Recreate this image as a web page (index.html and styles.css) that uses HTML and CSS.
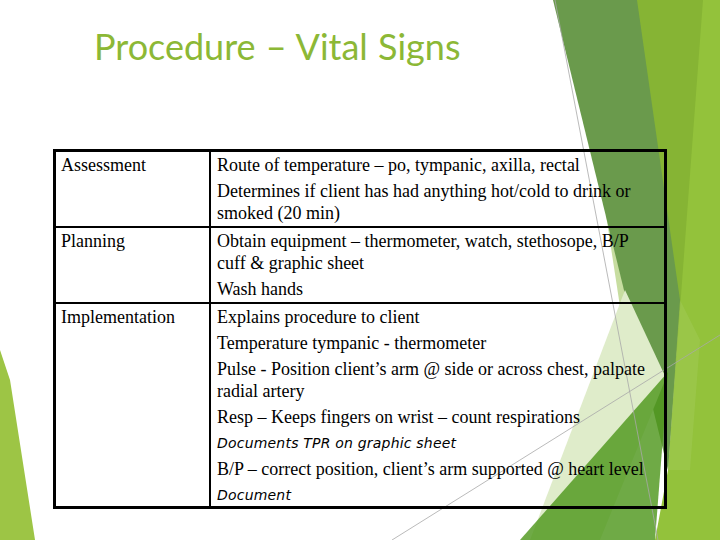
FILE: index.html
```html
<!DOCTYPE html>
<html>
<head>
<meta charset="utf-8">
<link rel="stylesheet" href="styles.css">
</head>
<body>
<div class="slide">
  <svg class="deco" viewBox="0 0 720 540" width="720" height="540" aria-hidden="true">
    <polygon class="base" points="637,0 720,0 720,540 655,540 668,470 680,300"/>
    <polygon class="topmid" points="630,0 703,0 668,470"/>
    <polygon class="paleb" points="606,215 662,330 668,385 632,385"/>
    <polygon class="dark" points="553,0 637,0 680,300 668,470"/>
    <polygon class="palea" points="625,290 666,378 600,540 530,540"/>
    <polygon class="sheen" points="680,300 700,340 690,470 668,470"/>
    <polygon class="mid" points="520,540 668,372 655,540"/>
    <polygon class="leaf" points="0,350 10,380 35,540 0,540"/>
    <line class="thin" x1="555" y1="0" x2="658" y2="540"/>
    <line class="thin" x1="392" y1="540" x2="720" y2="335"/>
  </svg>
  <h1 class="title">Procedure – Vital Signs</h1>
  <table class="grid">
    <tr>
      <td class="label">Assessment</td>
      <td class="body">
        <p>Route of temperature – po, tympanic, axilla, rectal</p>
        <p>Determines if client has had anything hot/cold to drink or smoked (20 min)</p>
      </td>
    </tr>
    <tr>
      <td class="label">Planning</td>
      <td class="body">
        <p>Obtain equipment – thermometer, watch, stethosope, B/P cuff &amp; graphic sheet</p>
        <p>Wash hands</p>
      </td>
    </tr>
    <tr>
      <td class="label last">Implementation</td>
      <td class="body last">
        <p>Explains procedure to client</p>
        <p>Temperature tympanic - thermometer</p>
        <p>Pulse - Position client’s arm @ side or across chest, palpate radial artery</p>
        <p>Resp – Keeps fingers on wrist – count respirations</p>
        <p class="note">Documents TPR on graphic sheet</p>
        <p>B/P – correct position, client’s arm supported @ heart level</p>
        <p class="note">Document</p>
      </td>
    </tr>
  </table>
</div>
</body>
</html>
```

FILE: styles.css
```css
html, body {
  margin: 0;
  padding: 0;
  background: #ffffff;
}

.slide {
  position: relative;
  width: 720px;
  height: 540px;
  overflow: hidden;
  background: #ffffff;
  display: flex;
  flex-direction: column;
}

.deco {
  position: absolute;
  left: 0;
  top: 0;
  z-index: 0;
}

.base { fill: #93c23b; }
.topmid { fill: #86b434; }
.dark { fill: #6a9a4c; }
.palea { fill: #dfecca; }
.paleb { fill: #c7dda0; }
.sheen { fill: #ffffff; opacity: 0.07; }
.mid { fill: #4e961b; opacity: 0.81; }
.leaf { fill: #9dc545; }
.thin { stroke: #a8a8a8; stroke-width: 0.8; }

.title {
  position: relative;
  z-index: 1;
  margin: 24px 0 0 94px;
  font-family: "Lato", "Open Sans", sans-serif;
  font-weight: normal;
  font-size: 36px;
  line-height: 44px;
  color: #8cb836;
  letter-spacing: 0px;
  word-spacing: 1px;
}

.grid {
  position: relative;
  z-index: 1;
  box-sizing: border-box;
  margin: 81px 0 0 53px;
  width: 614px;
  border: 3px solid #000000;
  border-collapse: separate;
  border-spacing: 0;
  font-family: "Liberation Serif", "Times New Roman", serif;
  font-size: 18px;
  line-height: 22px;
  color: #000000;
}

.grid td {
  vertical-align: top;
  padding: 2px 6px 2px 6px;
  border-bottom: 2px solid #000000;
}

.grid td.last {
  border-bottom: none;
  padding-bottom: 0;
}

.grid td.label {
  width: 142px;
  padding-left: 5px;
  border-right: 2px solid #000000;
}

.grid p {
  margin: 0;
}

.grid p + p {
  margin-top: 4px;
}

.grid p.note {
  font-family: "DejaVu Sans", "Verdana", sans-serif;
  font-style: italic;
  font-size: 14px;
  letter-spacing: 0.2px;
}
```
